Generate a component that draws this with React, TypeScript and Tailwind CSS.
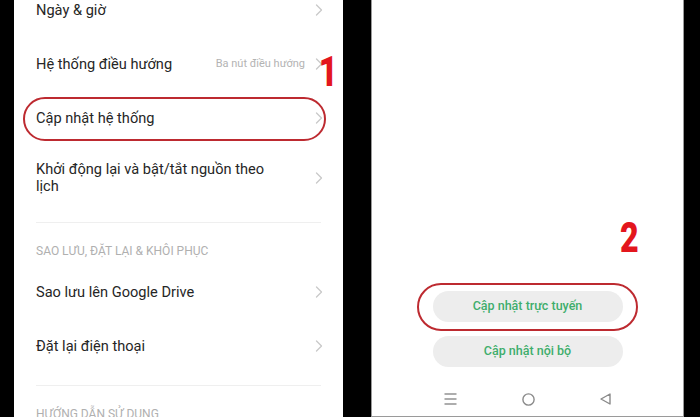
import React from "react";

const font = { fontFamily: "Roboto, 'Noto Sans', sans-serif" };

function Chevron() {
  return (
    <svg width="8" height="12" viewBox="0 0 8 12" className="shrink-0">
      <polyline
        points="1.5,1 6.5,6 1.5,11"
        fill="none"
        stroke="#c9c9c9"
        strokeWidth="1.3"
        strokeLinecap="round"
        strokeLinejoin="round"
      />
    </svg>
  );
}

function Row({
  label,
  value,
  children,
  tall,
}: {
  label: React.ReactNode;
  value?: string;
  children?: React.ReactNode;
  tall?: boolean;
}) {
  return (
    <div
      className={`relative flex items-center justify-between pl-[22px] pr-[20px] ${
        tall ? "h-[66px]" : "h-[54px]"
      }`}
    >
      <div className="text-[14.6px] leading-[17px] text-[#262626]">{label}</div>
      <div className="flex items-center gap-[10px]">
        {value && (
          <span className="text-[11px] text-[#b3b3b3] whitespace-nowrap">
            {value}
          </span>
        )}
        <Chevron />
      </div>
      {children}
    </div>
  );
}

function Divider() {
  return <div className="ml-[22px] mr-[22px] h-px bg-[#efefef]" />;
}

function Header({ children }: { children: React.ReactNode }) {
  return (
    <div className="pl-[22px] pt-[21px] pb-[7px] text-[12px] leading-[14px] text-[#b0b0b0] whitespace-nowrap">
      {children}
    </div>
  );
}

function NavBar() {
  return (
    <div className="h-[34px] flex items-center justify-between pl-[72px] pr-[72px]">
      <svg width="13" height="12" viewBox="0 0 13 12">
        <g stroke="#8a8a8a" strokeWidth="1.4">
          <line x1="0.5" y1="1" x2="12.5" y2="1" />
          <line x1="0.5" y1="6" x2="12.5" y2="6" />
          <line x1="0.5" y1="11" x2="12.5" y2="11" />
        </g>
      </svg>
      <svg width="13" height="13" viewBox="0 0 13 13">
        <circle cx="6.5" cy="6.5" r="5.6" fill="none" stroke="#8a8a8a" strokeWidth="1.4" />
      </svg>
      <svg width="11" height="12" viewBox="0 0 11 12">
        <polygon
          points="1,6 10,1 10,11"
          fill="none"
          stroke="#8a8a8a"
          strokeWidth="1.4"
          strokeLinejoin="round"
        />
      </svg>
    </div>
  );
}

export default function App() {
  return (
    <div className="w-[700px] h-[417px] bg-black flex overflow-hidden" style={font}>
      {/* left screen: settings list */}
      <div className="ml-[14px] w-[329px] h-[417px] bg-white overflow-hidden">
        <div className="-mt-[17px]">
          <Row label="Ngày & giờ" />
          <Row label="Hệ thống điều hướng" value="Ba nút điều hướng">
            <span className="absolute right-[3px] top-[20px] text-[42px] leading-[30px] font-black text-[#e3161d] scale-x-[0.78]">
              1
            </span>
          </Row>
          <Row label="Cập nhật hệ thống">
            <div className="absolute left-[9px] right-[17px] top-[6px] bottom-[4px] rounded-[22px] border-2 border-[#bd2a30]" />
          </Row>
          <Row
            tall
            label={
              <div className="max-w-[240px]">
                Khởi động lại và bật/tắt nguồn theo lịch
              </div>
            }
          />
          <div className="h-[11px]" />
          <Divider />
          <Header>SAO LƯU, ĐẶT LẠI &amp; KHÔI PHỤC</Header>
          <Row label="Sao lưu lên Google Drive" />
          <Row label="Đặt lại điện thoại" />
          <div className="h-[12px]" />
          <Divider />
          <Header>HƯỚNG DẪN SỬ DỤNG</Header>
        </div>
      </div>

      {/* right screen: update options */}
      <div className="ml-[28px] w-[313px] h-[417px] bg-white border-x border-b border-[#9a9a9a] flex flex-col relative">
        <span className="absolute left-[245px] top-[220px] text-[43px] leading-[34px] font-black text-[#e3161d] scale-x-[0.75]">
          2
        </span>
        <div className="flex-1" />
        <div className="relative flex flex-col items-center gap-[14px]">
          <div className="absolute left-[45px] w-[221px] top-[-8px] h-[48px] rounded-[24px] border-2 border-[#bd2a30]" />
          <div className="w-[190px] h-[31px] rounded-full bg-[#ededed] flex items-center justify-center text-[12.5px] font-medium text-[#3fae6c]">
            Cập nhật trực tuyến
          </div>
          <div className="w-[190px] h-[31px] rounded-full bg-[#ededed] flex items-center justify-center text-[12.5px] font-medium text-[#3fae6c]">
            Cập nhật nội bộ
          </div>
        </div>
        <div className="h-[15px]" />
        <NavBar />
      </div>
    </div>
  );
}
